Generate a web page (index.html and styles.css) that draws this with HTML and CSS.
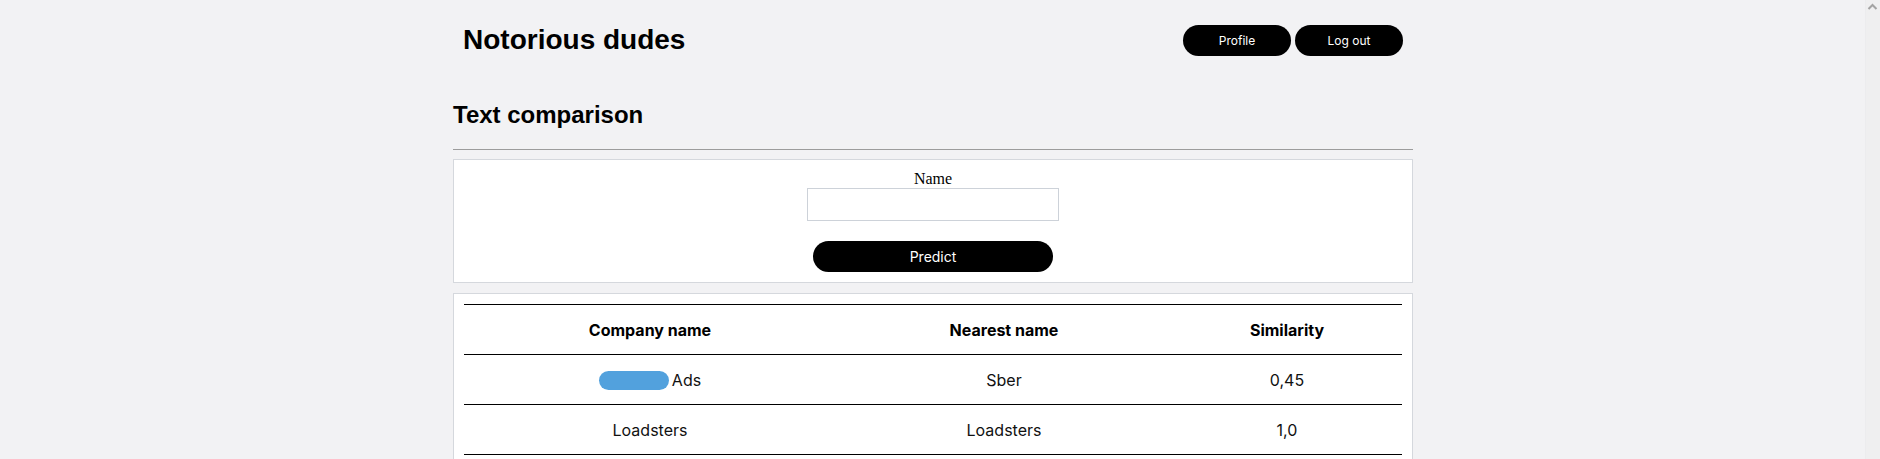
FILE: index.html
```html
<!DOCTYPE html>
<html lang="en">
<head>
<meta charset="utf-8">
<title>Notorious dudes</title>
<link rel="stylesheet" href="styles.css">
</head>
<body>
<div class="page">
  <div class="container">
    <header class="topbar">
      <h1 class="brand">Notorious dudes</h1>
      <nav class="nav">
        <button class="pill pill-sm" type="button">Profile</button>
        <button class="pill pill-sm" type="button">Log out</button>
      </nav>
    </header>

    <h2 class="page-title">Text comparison</h2>
    <div class="rule"></div>

    <form class="card form-card">
      <label class="field-label" for="name">Name</label>
      <input class="field-input" id="name" type="text">
      <button class="pill pill-wide" type="button">Predict</button>
    </form>

    <section class="card table-card">
      <table class="results">
        <colgroup>
          <col class="col-company">
          <col class="col-nearest">
          <col class="col-sim">
        </colgroup>
        <thead>
          <tr>
            <th>Company name</th>
            <th>Nearest name</th>
            <th>Similarity</th>
          </tr>
        </thead>
        <tbody>
          <tr>
            <td><span class="redacted"></span>Ads</td>
            <td>Sber</td>
            <td>0,45</td>
          </tr>
          <tr>
            <td>Loadsters</td>
            <td>Loadsters</td>
            <td>1,0</td>
          </tr>
        </tbody>
      </table>
    </section>
  </div>
</div>
<div class="scrollbar" aria-hidden="true">
  <svg class="scroll-arrow" width="15" height="14" viewBox="0 0 15 14">
    <path d="M3.5 9 L7.5 5 L11.5 9" fill="none" stroke="#a3a3a3" stroke-width="2"/>
  </svg>
</div>
</body>
</html>
```

FILE: styles.css
```css
html, body {
  margin: 0;
  padding: 0;
}

body {
  display: flex;
  align-items: flex-start;
  background: #f2f2f4;
  color: #000;
  font-family: "Liberation Sans", Arial, sans-serif;
}

.page {
  flex: 1;
  min-width: 0;
}

.scrollbar {
  flex: 0 0 15px;
  align-self: stretch;
  min-height: 100vh;
  background: #efeff0;
  border-left: 1px solid #ececee;
  box-sizing: border-box;
}

.scroll-arrow {
  display: block;
  margin-left: -1px;
}

.container {
  width: 960px;
  margin: 0 auto;
  padding-left: 1px;
}

.topbar {
  display: flex;
  justify-content: space-between;
  align-items: center;
  padding: 24px 10px 0;
}

.brand {
  margin: 0;
  font-size: 28px;
  line-height: 32px;
  font-weight: 700;
}

.nav {
  display: flex;
  gap: 4px;
}

.pill {
  border: 0;
  background: #000;
  color: #fff;
  font-family: Inter, "Noto Sans", sans-serif;
  cursor: pointer;
  padding: 0;
}

.pill-sm {
  width: 108px;
  height: 31px;
  border-radius: 16px;
  font-size: 12px;
}

.page-title {
  margin: 45px 0 0;
  font-size: 24px;
  line-height: 28px;
  font-weight: 700;
}

.rule {
  margin-top: 20px;
  border-top: 1px solid #9c9c9c;
}

.card {
  background: #fff;
  border: 1px solid #d5d8dd;
  margin-top: 9px;
}

.form-card {
  display: flex;
  flex-direction: column;
  align-items: center;
  padding: 10px 0;
}

.field-label {
  display: block;
  font-family: "Liberation Serif", "Times New Roman", serif;
  font-size: 16px;
  line-height: 18px;
}

.field-input {
  box-sizing: border-box;
  width: 252px;
  height: 33px;
  margin: 0;
  border: 1px solid #cdd2d9;
  background: #fff;
  font-size: 14px;
  padding: 0 6px;
}

.pill-wide {
  width: 240px;
  height: 31px;
  margin-top: 20px;
  border-radius: 16px;
  font-size: 14px;
}

.table-card {
  margin-top: 10px;
  padding: 10px;
}

.results {
  width: 938px;
  border-collapse: collapse;
  font-family: Inter, "Noto Sans", sans-serif;
  font-size: 16px;
  color: #111;
}

.col-company { width: 372px; }
.col-nearest { width: 336px; }
.col-sim { width: 230px; }

.results tr {
  border-top: 1px solid #000;
  border-bottom: 1px solid #000;
}

.results th,
.results td {
  height: 49px;
  padding: 0;
  text-align: center;
  vertical-align: middle;
}

.results th {
  font-weight: 700;
  color: #000;
}

.redacted {
  display: inline-block;
  width: 70px;
  height: 19px;
  margin-right: 3px;
  border-radius: 10px;
  background: #52a1dd;
  vertical-align: -4px;
}
```
